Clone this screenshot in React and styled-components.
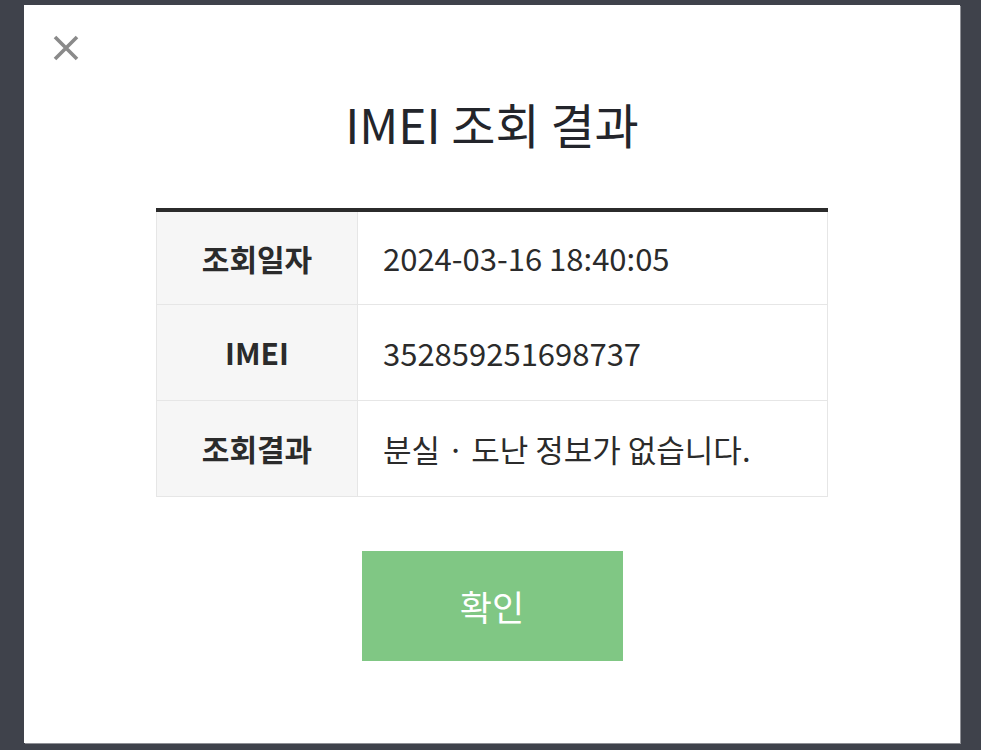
import React from 'react';
import styled, { createGlobalStyle } from 'styled-components';

const GlobalStyle = createGlobalStyle`
  html, body {
    margin: 0;
    padding: 0;
    background: #3f424b;
  }
  * {
    box-sizing: border-box;
  }
  body {
    font-family: "Noto Sans CJK KR", "Noto Sans", sans-serif;
  }
`;

const rows = [
  { label: '조회일자', value: '2024-03-16 18:40:05' },
  { label: 'IMEI', value: '352859251698737' },
  { label: '조회결과', value: '분실 · 도난 정보가 없습니다.' },
];

export default function App() {
  return (
    <>
      <GlobalStyle />
      <Page>
        <Modal>
          <CloseButton aria-label="닫기">
            <svg width="26" height="26" viewBox="0 0 26 26">
              <path d="M2 2 L24 24 M24 2 L2 24" stroke="#8a8a8a" strokeWidth="3.6" />
            </svg>
          </CloseButton>
          <Title>IMEI 조회 결과</Title>
          <Table>
            <tbody>
              {rows.map((row) => (
                <tr key={row.label}>
                  <HeadCell>{row.label}</HeadCell>
                  <ValueCell>{row.value}</ValueCell>
                </tr>
              ))}
            </tbody>
          </Table>
          <ConfirmButton>확인</ConfirmButton>
        </Modal>
      </Page>
    </>
  );
}

const Page = styled.div`
  width: 981px;
  height: 750px;
  padding: 5px 21px 7px 24px;
  background: #3f424b;
  overflow: hidden;
`;

const Modal = styled.div`
  position: relative;
  width: 936px;
  height: 738px;
  background: #fff;
  box-shadow: 1px 1px 0 #8f9096;
  display: flex;
  flex-direction: column;
  align-items: center;
  padding-top: 83px;
`;

const CloseButton = styled.button`
  position: absolute;
  left: 29px;
  top: 30px;
  width: 26px;
  height: 26px;
  padding: 0;
  border: none;
  background: none;
  cursor: pointer;
  svg {
    display: block;
  }
`;

const Title = styled.h1`
  margin: 0;
  font-size: 48px;
  line-height: 70px;
  font-weight: 400;
  color: #23252b;
`;

const Table = styled.table`
  margin-top: 50px;
  width: 672px;
  border-collapse: collapse;
  border-top: 4px solid #2b2b2b;
  td {
    height: 96px;
    border: 1px solid #e6e6e6;
    color: #2b2b2b;
  }
  tr:first-child td {
    height: 94px;
    border-top: none;
  }
`;

const HeadCell = styled.td`
  width: 201px;
  background: #f6f6f6;
  text-align: center;
  font-size: 30px;
  font-weight: 700;
`;

const ValueCell = styled.td`
  padding: 0 25px;
  font-size: 31px;
  font-weight: 400;
`;

const ConfirmButton = styled.button`
  margin-top: 54px;
  width: 261px;
  height: 110px;
  border: none;
  background: #80c784;
  color: #fff;
  font-family: "Noto Sans CJK KR", "Noto Sans", sans-serif;
  font-size: 35px;
  font-weight: 400;
  cursor: pointer;
`;
